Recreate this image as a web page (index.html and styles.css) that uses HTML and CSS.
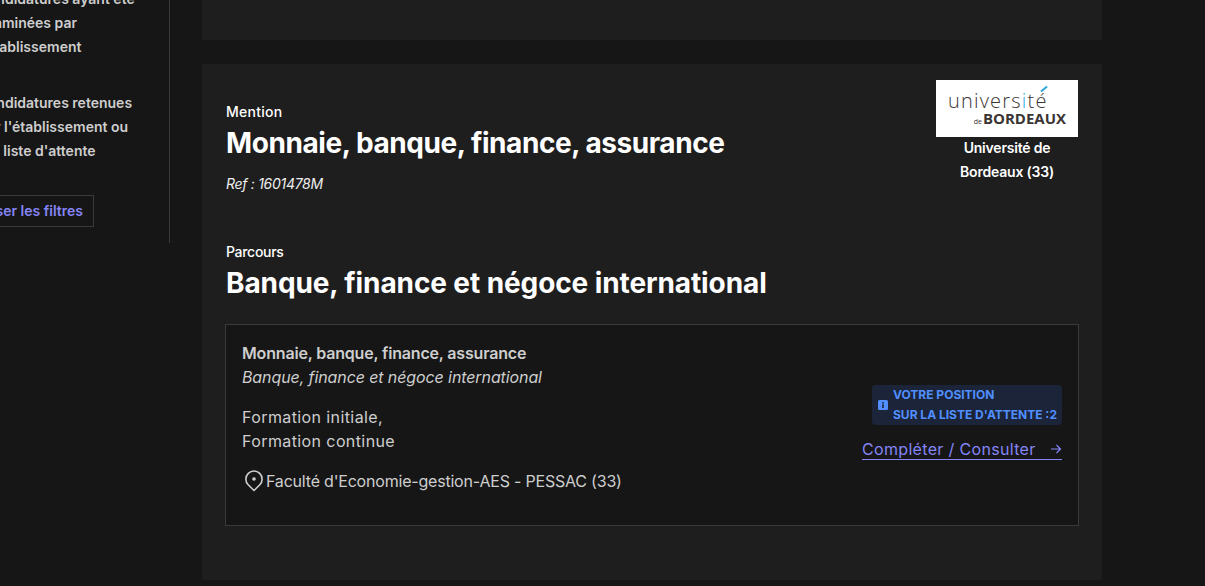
FILE: index.html
```html
<!DOCTYPE html>
<html lang="fr">
<head>
<meta charset="utf-8">
<title>Monnaie, banque, finance, assurance</title>
<link rel="stylesheet" href="styles.css">
</head>
<body>
<div class="page">
  <aside class="sidebar">
    <p class="filter first">Candidatures ayant été<br>examinées par<br>l'établissement</p>
    <p class="filter second">Candidatures retenues<br>par l'établissement ou<br>sur liste d'attente</p>
    <button class="reset">Réinitialiser les filtres</button>
  </aside>
  <main class="results">
    <div class="card-stub"></div>
    <section class="card">
      <header class="head">
        <div class="titles">
          <div class="label label-mention">Mention</div>
          <h2 class="title title-main">Monnaie, banque, finance, assurance</h2>
          <div class="ref">Ref : 1601478M</div>
        </div>
        <div class="univ">
          <div class="logo">
            <div class="logo-top">univers<span class="blue">i</span>té</div>
            <span class="logo-accent"></span>
            <div class="logo-bottom"><span class="logo-de">de</span>BORDEAUX</div>
          </div>
          <div class="univ-name">Université de<br>Bordeaux (33)</div>
        </div>
      </header>
      <div class="label label-parcours">Parcours</div>
      <h2 class="title title-sub">Banque, finance et négoce international</h2>
      <div class="box">
        <div class="info">
          <div class="b-title">Monnaie, banque, finance, assurance</div>
          <div class="b-sub">Banque, finance et négoce international</div>
          <div class="b-type">Formation initiale,<br>Formation continue</div>
          <div class="b-place">
            <svg class="pin" width="20" height="22" viewBox="0 0 20 22" fill="none" stroke="currentColor" stroke-width="1.6"><path d="M10 20.5 4.2 14.8a8.1 8.1 0 1 1 11.6 0z" stroke-linejoin="round"/><circle cx="10" cy="9" r="1.8" fill="currentColor" stroke="none"/></svg>
            <span class="place-text">Faculté d'Economie-gestion-AES - PESSAC (33)</span>
          </div>
        </div>
        <div class="actions">
          <div class="badge">
            <svg class="badge-icon" width="10" height="10" viewBox="0 0 10 10"><rect width="10" height="10" rx="1.5" fill="#518fff"/><rect x="4.2" y="2" width="1.6" height="1.5" fill="#1b2438"/><rect x="4.2" y="4.3" width="1.6" height="3.7" fill="#1b2438"/></svg>
            <span>VOTRE POSITION<br>SUR LA LISTE D'ATTENTE :2</span>
          </div>
          <a class="link" href="#">Compléter / Consulter
            <svg class="arrow" width="12" height="12" viewBox="0 0 12 12" fill="none" stroke="currentColor" stroke-width="1.2"><path d="M1 6h9.5M6.5 2l4 4-4 4"/></svg>
          </a>
        </div>
      </div>
    </section>
  </main>
</div>
</body>
</html>
```
FILE: styles.css
```css
* { box-sizing: border-box; }
html, body { margin: 0; height: 100%; }
body { background: #161616; color: #fff; font-family: Inter, "Noto Sans", sans-serif; overflow: hidden; }
.page { display: flex; height: 586px; overflow: hidden; }

.sidebar { flex: none; width: 170px; height: 243px; border-right: 1px solid #3a3a3a; overflow: hidden; font-size: 14px; line-height: 24px; font-weight: 600; color: #cecece; }
.filter { margin: 0 0 0 -22px; width: 220px; white-space: nowrap; }
.first { margin-top: -13px; }
.second { margin-top: 32px; }
.reset { display: block; margin: 32px 0 0 -70px; width: 164px; height: 32px; padding: 0 10px 0 0; background: none; border: 1px solid #3a3a3a; color: #8585f6; font: 600 14px/24px Inter, "Noto Sans", sans-serif; text-align: right; white-space: nowrap; }

.results { flex: none; width: 900px; margin-left: 32px; }
.card-stub { height: 40px; background: #1e1e1e; }
.card { margin-top: 24px; height: 516px; background: #1e1e1e; padding: 16px 24px 0; }
.head { display: flex; justify-content: space-between; height: 160px; }
.titles { padding-top: 20px; }
.label { font-size: 14px; line-height: 24px; font-weight: 500; }
.label-mention { letter-spacing: .25px; }
.label-parcours { letter-spacing: -.3px; }
.title { margin: 1px 0 0; font-size: 28px; line-height: 36px; font-weight: 700; white-space: nowrap; }
.title-main { letter-spacing: -.43px; }
.title-sub { letter-spacing: -.1px; }
.ref { margin-top: 11px; font-size: 14px; line-height: 24px; font-style: italic; color: #eee; letter-spacing: -.3px; }

.univ { width: 142px; text-align: center; }
.logo { position: relative; height: 57px; background: #fff; padding: 10px 0 0 12px; color: #3a3534; text-align: left; }
.logo-top { font: 300 20px/21px "Open Sans", sans-serif; letter-spacing: 1.2px; white-space: nowrap; }
.blue { color: #2fa8df; }
.logo-accent { position: absolute; left: 104px; top: 8px; width: 8px; height: 2px; background: #2fa8df; transform: rotate(-40deg); }
.logo-bottom { font: 700 15px/14px "Open Sans", sans-serif; text-align: right; padding-right: 12px; white-space: nowrap; }
.logo-de { font-size: 7px; font-weight: 400; margin-right: 1px; }
.univ-name { font-size: 14px; line-height: 24px; font-weight: 600; margin-top: -1px; letter-spacing: -.2px; }

.box { display: flex; justify-content: space-between; margin: 23px 0 0 -1px; width: 854px; height: 202px; background: #161616; border: 1px solid #3a3a3a; padding: 16px; color: #cecece; font-size: 16px; line-height: 24px; }
.b-title { font-weight: 600; letter-spacing: -.17px; }
.b-sub { font-style: italic; letter-spacing: -.1px; }
.b-type { margin-top: 16px; letter-spacing: .4px; }
.b-place { display: flex; align-items: center; margin-top: 16px; margin-left: 2px; gap: 2px; }
.place-text { letter-spacing: -.2px; }
.pin { flex: none; }

.actions { display: flex; flex-direction: column; align-items: flex-end; padding-top: 44px; }
.badge { display: flex; align-items: center; gap: 5px; width: 190px; height: 40px; padding: 0 6px; background: #1b2438; border-radius: 4px; color: #518fff; font-size: 12px; line-height: 20px; font-weight: 700; white-space: nowrap; }
.badge-icon { flex: none; }
.link { display: flex; justify-content: space-between; align-items: center; width: 200px; margin-top: 14px; color: #8585f6; text-decoration: none; font-size: 16px; line-height: 20px; letter-spacing: .33px; border-bottom: 1px solid #8585f6; }
```
